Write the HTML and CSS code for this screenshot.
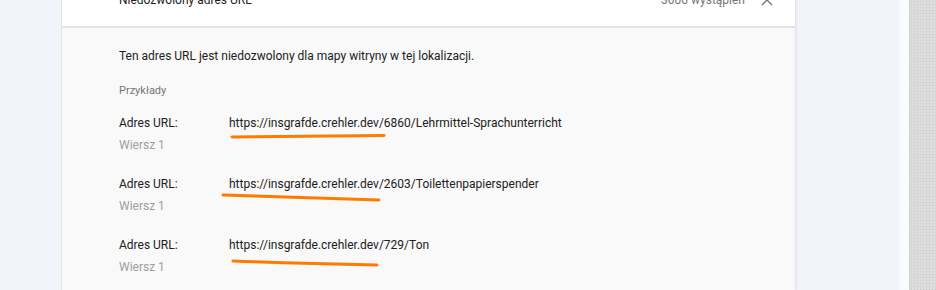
FILE: index.html
```html
<!DOCTYPE html>
<html lang="pl">
<head>
  <meta charset="UTF-8" />
  <title>Niedozwolony adres URL</title>
  <link rel="stylesheet" href="styles.css">
</head>
<body>
  <div class="page">
    <div class="gutter"></div>

    <div class="card">
      <div class="card-head">
        <span class="head-title">Niedozwolony adres URL</span>
        <span class="head-count">3000 wystąpień</span>
        <svg class="chevron" width="12" height="8" viewBox="0 0 12 8"><path d="M1 7 L6 2 L11 7" fill="none" stroke="#757575" stroke-width="1.4"/></svg>
      </div>

      <div class="card-body">
        <p class="desc">Ten adres URL jest niedozwolony dla mapy witryny w tej lokalizacji.</p>
        <p class="examples">Przykłady</p>

        <div class="example">
          <div class="row">
            <span class="label">Adres URL:</span>
            <span class="url">https://insgrafde.crehler.dev/6860/Lehrmittel-Sprachunterricht</span>
          </div>
          <div class="line-no">Wiersz 1</div>
          <svg class="mark" style="left: 111px; top: 16px;" width="158" height="8" viewBox="0 0 158 8"><path d="M2 5 Q70 4.5 154 3.5" fill="none" stroke="#ff7a00" stroke-width="3" stroke-linecap="round"/></svg>
        </div>

        <div class="example">
          <div class="row">
            <span class="label">Adres URL:</span>
            <span class="url">https://insgrafde.crehler.dev/2603/Toilettenpapierspender</span>
          </div>
          <div class="line-no">Wiersz 1</div>
          <svg class="mark" style="left: 102px; top: 15px;" width="162" height="11" viewBox="0 0 162 11"><path d="M2 3 Q70 5 158 8" fill="none" stroke="#ff7a00" stroke-width="3" stroke-linecap="round"/></svg>
        </div>

        <div class="example">
          <div class="row">
            <span class="label">Adres URL:</span>
            <span class="url">https://insgrafde.crehler.dev/729/Ton</span>
          </div>
          <div class="line-no">Wiersz 1</div>
          <svg class="mark" style="left: 112px; top: 20px;" width="150" height="10" viewBox="0 0 150 10"><path d="M2 3 Q70 5.5 146 7" fill="none" stroke="#ff7a00" stroke-width="3" stroke-linecap="round"/></svg>
        </div>
      </div>
    </div>

    <div class="side"></div>
    <div class="strip"></div>
    <div class="scroll"></div>
  </div>
</body>
</html>
```

FILE: styles.css
```css
html, body { margin: 0; height: 100%; }
body { font-family: Roboto, "Liberation Sans", sans-serif; background: #f1f4fb; overflow: hidden; }

.page { display: flex; height: 290px; }
.gutter { width: 62px; flex: none; }
.side { width: 104px; flex: none; }
.strip { width: 10px; flex: none; background: #fafbfd; }
.scroll {
  flex: 1;
  background-color: #dcdcdc;
  background-image: radial-gradient(#c9c9c9 1px, transparent 1px);
  background-size: 3px 3px;
  border-left: 1px solid #cfcfcf;
}

.card {
  width: 733px;
  flex: none;
  background: #f9f9f9;
  box-shadow: -1px 0 0 #e2e4ea, 1px 0 0 #e2e4ea, 2px 0 2px rgba(0,0,0,0.04);
}

.card-head {
  height: 26px;
  background: #fff;
  border-bottom: 2px solid #e3e3e3;
  display: flex;
  align-items: flex-start;
  padding-left: 57px;
  padding-right: 22px;
  font-size: 12px;
  color: #212121;
}
.head-title { margin-top: -7px; flex: 1; }
.head-count { margin-top: -7px; color: #757575; margin-right: 16px; }
.chevron { margin-top: -2px; }

.card-body { padding: 21px 0 0 57px; font-size: 12px; color: #212121; }
.card-body p { margin: 0; }
.desc { line-height: 14px; }
.examples { font-size: 11px; color: #757575; margin-top: 21px !important; line-height: 14px; }

.example { position: relative; height: 61px; }
.examples + .example { margin-top: 18px; }
.row { display: flex; line-height: 14px; }
.label { width: 110px; flex: none; }
.url { color: #212121; }
.line-no { color: #9e9e9e; margin-top: 8px; line-height: 14px; }

.mark { position: absolute; }
```
